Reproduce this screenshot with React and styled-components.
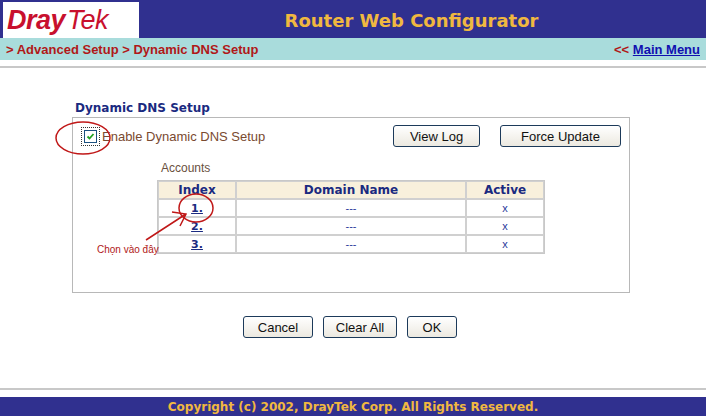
import React from "react";
import styled, { createGlobalStyle } from "styled-components";

const Global = createGlobalStyle`
  html, body { margin: 0; padding: 0; background: #fff; }
  body { font-family: "Liberation Sans", Arial, sans-serif; width: 706px; height: 416px; overflow: hidden; }
`;

const Page = styled.div`
  position: relative;
  width: 706px;
  height: 416px;
  display: flex;
  flex-direction: column;
`;

const Header = styled.div`
  height: 38px;
  background: #30308f;
  display: flex;
  align-items: stretch;
  padding: 2px 2px 0 3px;
  box-sizing: border-box;
`;

const Logo = styled.div`
  width: 132px;
  background: #fff;
  display: flex;
  align-items: center;
  padding-left: 4px;
  font-family: "Liberation Sans", Arial, sans-serif;
  font-size: 27px;
  color: #c8102e;
  letter-spacing: -0.5px;
  b { font-weight: 900; font-style: italic; }
  i { font-weight: 400; margin-left: 2px; }
`;

const Title = styled.div`
  flex: 1;
  display: flex;
  align-items: center;
  justify-content: center;
  padding-right: 20px;
  font-family: "DejaVu Sans", Verdana, sans-serif;
  font-weight: bold;
  font-size: 18px;
  color: #f0b840;
`;

const Crumbs = styled.div`
  height: 22px;
  background: #a9dcdc;
  display: flex;
  align-items: center;
  justify-content: space-between;
  padding: 0 6px;
  font-family: "Liberation Sans Narrow", "Liberation Sans", Arial, sans-serif;
  font-weight: bold;
  font-size: 13px;
  color: #b01818;
  a { color: #1010b0; }
`;

const Rule = styled.div`
  height: 2px;
  background: #c8c8c8;
  margin-top: ${p => p.$top}px;
`;

const Main = styled.div`
  padding: 33px 0 0 72px;
  flex: 1;
`;

const SectionTitle = styled.div`
  font-family: "DejaVu Sans", Verdana, sans-serif;
  font-weight: bold;
  font-size: 12px;
  color: #1a2a80;
  margin: 0 0 2px 3px;
`;

const Box = styled.div`
  width: 558px;
  height: 176px;
  border: 1px solid #b8b8b8;
  box-sizing: border-box;
  padding: 7px 8px 0 9px;
`;

const TopRow = styled.div`
  display: flex;
  align-items: center;
`;

const Check = styled.span`
  width: 11px;
  height: 11px;
  border: 1px solid #1c5180;
  outline: 1px dotted #333;
  outline-offset: 2px;
  display: inline-flex;
  align-items: center;
  justify-content: center;
  margin: 0 5px 0 2px;
`;

const Label = styled.span`
  font-size: 13px;
  color: #7a4a30;
  flex: 1;
`;

const Btn = styled.button`
  height: 22px;
  width: ${p => p.$w}px;
  margin-left: ${p => p.$ml || 0}px;
  border: 1px solid #1c3a5a;
  border-radius: 3px;
  background: linear-gradient(#fff, #ece9e0);
  font-family: "Liberation Sans", Arial, sans-serif;
  font-size: 13px;
  color: #111;
  padding: 0;
`;

const Accounts = styled.div`
  font-size: 12px;
  color: #6a5040;
  margin: 14px 0 5px 79px;
`;

const Table = styled.table`
  margin-left: 75px;
  border-collapse: separate;
  border-spacing: 0;
  border: 1px solid #c8c8c8;
  width: 388px;
  th, td { border: 1px solid #d0d0d0; height: 16px; padding: 0; text-align: center; }
  th { background: #f8f0dc; font-family: "DejaVu Sans", Verdana, sans-serif; font-size: 12px; color: #1a2a80; }
  td { font-size: 11px; color: #2a3a9a; }
  td a { color: #1a2a80; font-weight: bold; font-family: "DejaVu Sans", Verdana, sans-serif; font-size: 11px; }
`;

const Actions = styled.div`
  display: flex;
  gap: 10px;
  margin: 23px 0 0 171px;
`;

const Footer = styled.div`
  height: 19px;
  background: #30308f;
  display: flex;
  align-items: center;
  justify-content: center;
  font-family: "DejaVu Sans", Verdana, sans-serif;
  font-weight: bold;
  font-size: 12px;
  color: #f0b840;
  margin-top: 7px;
`;

const Note = styled.svg`
  position: absolute;
  left: 0;
  top: 0;
  pointer-events: none;
`;

const Hint = styled.span`
  position: absolute;
  left: 97px;
  top: 244px;
  font-size: 10px;
  color: #b01818;
`;

export default function App() {
  return (
    <Page>
      <Global />
      <Header>
        <Logo><b>Dray</b><i>Tek</i></Logo>
        <Title>Router Web Configurator</Title>
      </Header>
      <Crumbs>
        <span>&gt; Advanced Setup &gt; Dynamic DNS Setup</span>
        <span>&lt;&lt; <a href="#">Main Menu</a></span>
      </Crumbs>
      <Rule $top={6} />
      <Main>
        <SectionTitle>Dynamic DNS Setup</SectionTitle>
        <Box>
          <TopRow>
            <Check>
              <svg width="9" height="9" viewBox="0 0 9 9"><path d="M1.5 4.5 L3.5 6.5 L7.5 2" stroke="#21a121" strokeWidth="1.8" fill="none" /></svg>
            </Check>
            <Label>Enable Dynamic DNS Setup</Label>
            <Btn $w={87}>View Log</Btn>
            <Btn $w={121} $ml={20}>Force Update</Btn>
          </TopRow>
          <Accounts>Accounts</Accounts>
          <Table>
            <thead>
              <tr><th style={{ width: 76 }}>Index</th><th>Domain Name</th><th style={{ width: 76 }}>Active</th></tr>
            </thead>
            <tbody>
              {["1.", "2.", "3."].map(n => (
                <tr key={n}><td><a href="#">{n}</a></td><td>---</td><td>x</td></tr>
              ))}
            </tbody>
          </Table>
        </Box>
        <Actions>
          <Btn $w={70}>Cancel</Btn>
          <Btn $w={74}>Clear All</Btn>
          <Btn $w={50}>OK</Btn>
        </Actions>
      </Main>
      <Rule $top={0} />
      <Footer>Copyright (c) 2002, DrayTek Corp. All Rights Reserved.</Footer>
      <Note width="706" height="416">
        <ellipse cx="83" cy="138" rx="27" ry="16" fill="none" stroke="#c01818" strokeWidth="1.5" />
        <ellipse cx="196" cy="208" rx="17" ry="14" fill="none" stroke="#c01818" strokeWidth="1.5" />
        <path d="M146 240 L186 214 M172 212 L186 214 L180 226" stroke="#c01818" strokeWidth="1.5" fill="none" />
      </Note>
      <Hint>Chọn vào đây</Hint>
    </Page>
  );
}
